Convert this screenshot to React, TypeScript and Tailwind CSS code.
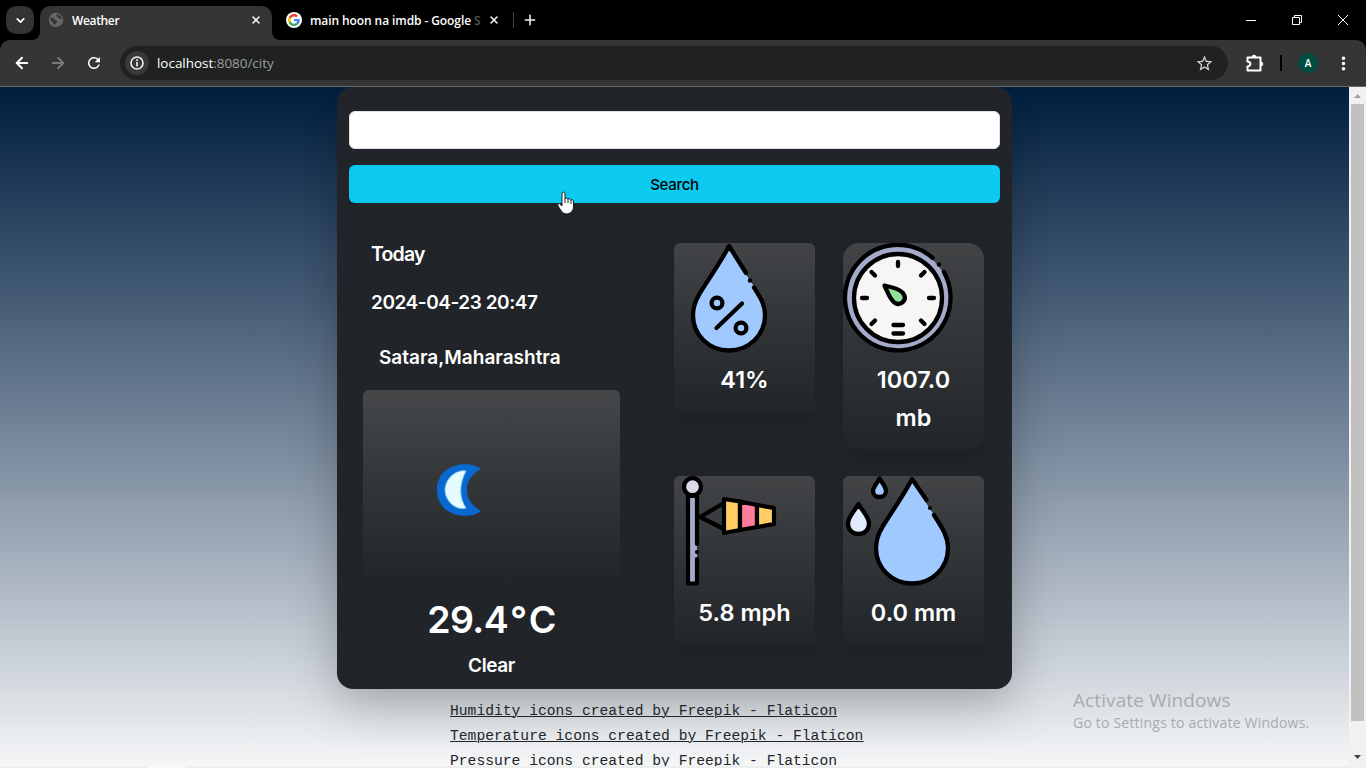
import type { ReactNode } from 'react';
import { ArrowLeft, ArrowRight, ChevronDown, Plus, X } from 'lucide-react';
import { MdRefresh, MdStarBorder, MdMoreVert } from 'react-icons/md';

function TabStrip() {
  return (
    <div className="flex h-10 w-full bg-black pl-[6px]">
      <div className="mt-[6px] flex h-7 w-7 items-center justify-center rounded-[10px] bg-[#333333]">
        <ChevronDown size={13} strokeWidth={3.4} color="#fff" />
      </div>
      <div className="relative ml-[6px] mt-[6px] flex h-[34px] w-[232px] items-center rounded-t-[10px] bg-[#353535] pb-[6px] pl-2 pr-[10px]">
        <svg className="absolute -left-2 bottom-0" width="8" height="8"><path d="M8 0V8H0A8 8 0 0 0 8 0Z" fill="#353535" /></svg>
        <svg className="absolute -right-2 bottom-0" width="8" height="8"><path d="M0 0V8H8A8 8 0 0 1 0 0Z" fill="#353535" /></svg>
        <svg width="16" height="16" viewBox="0 0 16 16">
          <circle cx="8" cy="8" r="7.2" fill="#64666a" />
          <path d="M2.2 6.2C4 5.4 6 6 6.7 7.4C7.2 8.5 9 8 9 9.6C9 11 7.8 11.4 7 12.9L5.4 12C5.5 10 3.6 9.6 2.2 8.3Z M8.2 2C9.6 2.6 7.5 4.4 9.3 5C11 5.6 10.6 7.6 13.8 6.8C13.3 4.5 11.2 2.2 8.2 2Z" fill="#353535" />
        </svg>
        <span className="ml-2 grow pt-px font-['Open_Sans',sans-serif] text-[12px] font-semibold tracking-[-0.35px] text-white">Weather</span>
        <X size={12} strokeWidth={3.2} color="#eee" />
      </div>
      <div className="flex h-10 w-[242px] items-center pl-[14px]">
        <div className="flex h-4 w-4 items-center justify-center rounded-full bg-white">
          <svg width="12" height="12" viewBox="0 0 48 48">
            <path fill="#EA4335" d="M24 9.5c3.5 0 6.700 1.200 9.200 3.600l6.900-6.900C35.900 2.400 30.500 0 24 0 14.600 0 6.500 5.400 2.600 13.200l8 6.200C12.400 13.700 17.700 9.500 24 9.500z" />
            <path fill="#4285F4" d="M47 24.500c0-1.600-.2-3.100-.4-4.500H24v9h12.900c-.6 3-2.300 5.500-4.800 7.200l7.700 6C44.400 38 47 31.800 47 24.500z" />
            <path fill="#FBBC05" d="M10.500 28.600c-.5-1.500-.8-3-.8-4.600s.3-3.200.8-4.600l-8-6.200C.9 16.500 0 20.100 0 24s.9 7.500 2.600 10.800z" />
            <path fill="#34A853" d="M24 48c6.500 0 11.900-2.100 15.900-5.800l-7.700-6c-2.200 1.500-4.900 2.300-8.200 2.300-6.300 0-11.600-4.200-13.500-9.900l-8 6.200C6.500 42.600 14.600 48 24 48z" />
          </svg>
        </div>
        <div className="ml-2 w-[168px] whitespace-nowrap pt-px font-['Open_Sans',sans-serif] text-[12px] font-semibold tracking-[-0.09px] text-white">main hoon na imdb - Google <span className="text-[#555]">S</span></div>
        <X className="ml-[10px] shrink-0" size={12} strokeWidth={3.2} color="#eee" />
        <div className="ml-[13px] h-4 w-px shrink-0 bg-[#444]" />
      </div>
      <div className="flex grow items-center">
        <Plus className="ml-2" size={16} strokeWidth={2.4} color="#eee" />
      </div>
      <svg width="138" height="40" fill="none" stroke="#fff">
        <path d="M18 20.500H28M64.500 17.500H71.500V24.500H64.500ZM66.500 17V15.500H73.500V22.500H72M110 15L120 25M120 15L110 25" />
      </svg>
    </div>
  );
}

function Toolbar() {
  return (
    <div className="h-[47px] w-full bg-black">
      <div className="flex h-full items-center rounded-t-[10px] border-b border-[#68696b] bg-[#353535] pl-[13px]">
        <ArrowLeft size={18} strokeWidth={2.6} color="#fff" />
        <ArrowRight className="ml-[18px]" size={18} strokeWidth={2.4} color="#77797b" />
        <MdRefresh className="ml-[18px]" size={18} color="#fff" />
        <div className="ml-[17px] flex h-[34px] w-[1108px] items-center rounded-full bg-[#202222] pl-[5px] pr-[14px]">
          <div className="flex h-6 w-6 items-center justify-center rounded-full bg-[#383838]">
            <svg width="14" height="14" viewBox="0 0 14 14"><circle cx="7" cy="7" r="6" fill="none" stroke="#eee" strokeWidth="1.6" /><path d="M7 6V10.500M7 3.300V5" stroke="#eee" strokeWidth="1.7" /></svg>
          </div>
          <span className="ml-2 grow font-['Open_Sans',sans-serif] text-[13.5px] tracking-[-0.04px] text-[#9b9da0]"><span className="text-white">localhost</span>:8080/city</span>
          <MdStarBorder size={19} color="#d2d2d2" />
        </div>
        <svg className="ml-[18px]" width="18" height="19" viewBox="0 0 18 19">
          <path d="M1.500 3.500H14.500V16.500H1.500V12.500C5.300 12 5.300 8 1.500 7.500Z" fill="none" stroke="#fff" strokeWidth="2" strokeLinejoin="round" />
          <path d="M5.800 3A2.200 2.200 0 0 1 10.200 3ZM15 7.800A2.200 2.200 0 0 1 15 12.200Z" fill="#fff" />
        </svg>
        <div className="ml-4 h-4 w-[2px] bg-black" />
        <div className="ml-4 flex h-5 w-5 items-center justify-center rounded-full bg-[#004d40] font-['Open_Sans',sans-serif] text-[10px] font-semibold text-white">A</div>
        <MdMoreVert className="ml-[15px]" size={21} color="#fff" />
      </div>
    </div>
  );
}

function HumidityIcon() {
  return (
    <svg width="110" height="110" viewBox="0 0 110 110" fill="none" stroke="#000" strokeWidth="4.3" strokeLinecap="round" strokeLinejoin="round">
      <path d="M55 3C48 17 36 34 26 50C21 58 19 64 19 72C19 92 35 107.500 55 107.500S91 92 91 72C91 64 89 58 84 50C74 34 62 17 55 3Z" fill="#a0c9ff" stroke="none" />
      <path d="M72 30L55 3C48 17 36 34 26 50C21 58 19 64 19 72C19 92 35 107.500 55 107.500S91 92 91 72C91 61 86 54 80 44.500" />
      <circle cx="76" cy="37.500" r="2.200" fill="#000" stroke="none" />
      <path d="M42.500 85L68 60.500" />
      <circle cx="43" cy="60" r="5.400" fill="#a0c9ff" /><circle cx="67" cy="85" r="5.400" fill="#a0c9ff" />
    </svg>
  );
}

function PressureIcon() {
  return (
    <svg width="110" height="110" viewBox="0 0 110 110" fill="none" stroke="#000" strokeWidth="4.3" strokeLinecap="round">
      <circle cx="55" cy="55" r="51.500" fill="#a4abca" stroke="none" />
      <path d="M89.600 14.900A52.800 52.800 0 1 0 100.900 28.900" />
      <circle cx="96" cy="21.500" r="2.200" fill="#000" stroke="none" />
      <circle cx="55" cy="55" r="44" fill="#f8f6f5" />
      <path d="M55 19V23M28.500 29L32 32.500M81.500 29L78 32.500M19 55H24M91 55H86M28.500 81L32 77.500M81.500 81L78 77.500M50.500 82H60M50.500 90.500H60" />
      <path d="M41.500 42.500C49 44 57 46.500 60 50C65 57 58 63 52 60C47 57 45 50 41.500 42.500Z" fill="#94df9b" strokeLinejoin="round" />
    </svg>
  );
}

function WindIcon() {
  return (
    <svg width="110" height="110" viewBox="0 0 110 110" fill="none" stroke="#000" strokeWidth="4.2" strokeLinejoin="round">
      <path d="M14 20H23V107.500H14Z" fill="#a4abca" stroke="none" />
      <path d="M23 68V20H14V107.500H23V83" strokeLinecap="round" />
      <circle cx="23" cy="76" r="2.100" fill="#000" stroke="none" />
      <circle cx="18.500" cy="10.700" r="8.500" fill="#dadbe8" />
      <path d="M50 27L26 41L50 53" />
      <path d="M50 23L66 25.500V54L50 57Z" fill="#ffcc66" />
      <path d="M66 25.500L83 29V51L66 54Z" fill="#ff7d99" />
      <path d="M83 29L100 32V48L83 51Z" fill="#ffcc66" />
    </svg>
  );
}

function RainIcon() {
  return (
    <svg width="110" height="110" viewBox="0 0 110 110" fill="none" stroke="#000" strokeWidth="4.3" strokeLinejoin="round" strokeLinecap="round">
      <path d="M69 3C62 17 50 34 40 50C35 58 33 64 33 72C33 92 49 107.500 69 107.500S105 92 105 72C105 64 103 58 98 50C88 34 76 17 69 3Z" fill="#a0c9ff" stroke="none" />
      <path d="M83.500 24L69 3C62 17 50 34 40 50C35 58 33 64 33 72C33 92 49 107.500 69 107.500S105 92 105 72C105 61 100 53 91 39" />
      <circle cx="87" cy="32" r="2.100" fill="#000" stroke="none" />
      <path d="M36.500 2.500C33 9 30 11 30 15C30 23 43 23 43 15C43 11 40 8 36.500 2.500Z" fill="#a0c9ff" />
      <path d="M15.500 28C11 36 5 41 5 47.500C5 61.500 26 61.500 26 47.500C26 41 20 36 15.500 28Z" fill="#e0ebff" />
    </svg>
  );
}

function Metric({ icon, lines, className }: { icon: ReactNode; lines: string[]; className: string }) {
  return (
    <div className={`w-[141px] bg-gradient-to-b from-[#424446] to-[#212529] shadow-[0_8px_16px_rgba(0,0,0,0.1)] ${className}`}>
      {icon}
      <div className="pt-2 text-center text-[23.5px] font-semibold leading-[38px] text-white">
        {lines.map((line) => <div key={line}>{line}</div>)}
      </div>
    </div>
  );
}

function WeatherPanel() {
  return (
    <main className="h-[602px] w-[675px] shrink-0 rounded-2xl bg-[#212529] px-3 pt-6 font-['Inter','Liberation_Sans',sans-serif] shadow-[0_16px_48px_rgba(0,0,0,0.25)]">
      <input aria-label="City" className="block h-[38px] w-full rounded-md border border-[#dee2e6] bg-white px-3 outline-none" />
      <button className="mt-4 block h-[38px] w-full rounded-md bg-[#0dcaf0] pt-[2px] text-[15px] font-medium tracking-[-0.3px] text-black">Search</button>
      <div className="flex pt-10">
        <section className="w-[325px] pl-[14px] font-semibold text-white">
          <div className="pl-2 text-[19.5px] leading-[22px] tracking-[-0.8px]">Today</div>
          <div className="mt-[26px] pl-2 text-[19px] leading-6 tracking-[-0.45px]">2024-04-23 20:47</div>
          <div className="mt-[31px] pl-4 text-[19px] leading-6">Satara,Maharashtra</div>
          <div className="mt-5 h-[194px] w-[257px] rounded-md bg-gradient-to-b from-[#454749] to-[#212529] pl-[73px] pt-[72px]">
            <svg width="48" height="56" viewBox="0 0 48 56">
              <path d="M45 7C34 13 31 20 31 28S35 43 45 49C35 58 1 56 1 28S35-2 45 7Z" fill="#0868d0" />
              <path d="M30 9C23 22 23 36 30 46C20 49 9 39 9 28S20 7 30 9Z" fill="#e5fbff" stroke="#77c7f3" strokeWidth="1" />
            </svg>
          </div>
          <div className="mt-3 w-[257px] text-center text-[37.5px] leading-[48px] tracking-[-0.6px]">29.4<span className="mx-[2px]">°</span>C</div>
          <div className="mt-[10px] w-[257px] text-center text-[19px] leading-6 tracking-[-0.4px]">Clear</div>
        </section>
        <section className="grid h-[440px] grid-cols-[141px_141px] grid-rows-[233px_207px] items-start gap-x-7">
          <Metric icon={<HumidityIcon />} lines={['41%']} className="h-[170px] rounded-md" />
          <Metric icon={<PressureIcon />} lines={['1007.0', 'mb']} className="h-[207px] rounded-2xl" />
          <Metric icon={<WindIcon />} lines={['5.8 mph']} className="h-[170px] rounded-md" />
          <Metric icon={<RainIcon />} lines={['0.0 mm']} className="h-[170px] rounded-md" />
        </section>
      </div>
    </main>
  );
}

function Scrollbar() {
  return (
    <div className="flex w-[17px] shrink-0 flex-col items-center bg-[#f1f1f1]">
      <svg width="17" height="17"><path d="M5 11L8.500 7L12 11Z" fill="#a0a0a0" /></svg>
      <div className="h-[617px] w-[13px] bg-[#c1c1c1]" />
      <svg className="mt-auto mb-[3px]" width="17" height="17"><path d="M5 7H12L8.500 11Z" fill="#444" /></svg>
    </div>
  );
}

export default function App() {
  return (
    <div className="relative flex h-[768px] w-[1366px] flex-col overflow-hidden">
      <TabStrip />
      <Toolbar />
      <div className="flex h-[681px]">
        <div className="flex w-[1349px] flex-col items-center overflow-hidden bg-gradient-to-b from-[#001f3f] to-[#f6f7f8]">
          <WeatherPanel />
          <div className="flex w-[449px] shrink-0 flex-col pt-[10px] font-['Liberation_Mono',monospace] text-[14.67px] leading-[25px] text-[#212529] underline decoration-1 underline-offset-1">
            <a>Humidity icons created by Freepik - Flaticon</a>
            <a>Temperature icons created by Freepik - Flaticon</a>
            <a>Pressure icons created by Freepik - Flaticon</a>
          </div>
        </div>
        <Scrollbar />
      </div>
      <div className="absolute bottom-0 left-0 h-[2px] w-[1349px] bg-[#ebeeec] pl-[148px]"><div className="h-full w-[38px] rounded-t bg-[#fafafa]" /></div>
      <div className="absolute left-[1073px] top-[688px] font-['Open_Sans',sans-serif] text-[#a9abae]">
        <div className="whitespace-nowrap text-[19px] leading-6 tracking-[0.1px]">Activate Windows</div>
        <div className="whitespace-nowrap text-[14px] leading-[22px] tracking-[0.2px]">Go to Settings to activate Windows.</div>
      </div>
      <svg className="absolute left-[557px] top-[191px]" width="18" height="24" viewBox="0 0 18 24">
        <path d="M5 15L2.300 12.500Q0 13 1 15L5 21Q7 23 10 23Q16 22 16.500 16V10Q15 7.500 13.800 9Q12 6.500 11 8Q9 6 8 7.500V2Q6.500 0 5 2Z" fill="#fff" stroke="#15212b" />
        <path d="M8 7V12M11 8V12M14 9V13" stroke="#15212b" />
      </svg>
    </div>
  );
}
